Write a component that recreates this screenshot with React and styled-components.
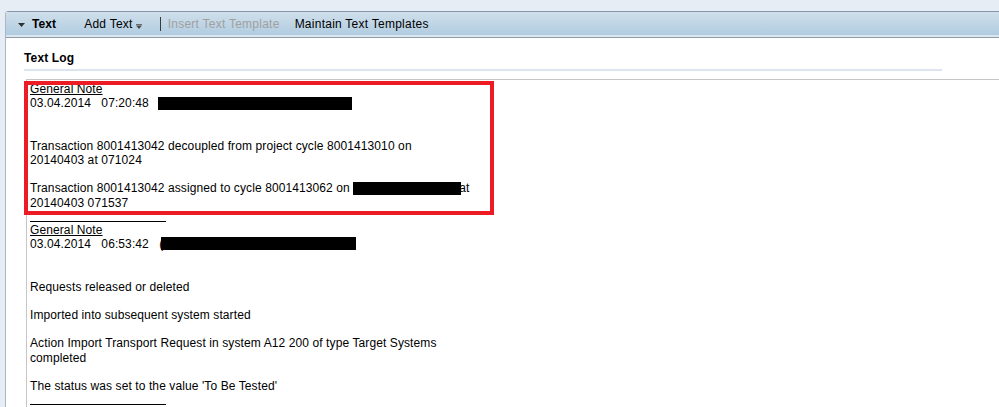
import React from 'react';
import styled, { createGlobalStyle } from 'styled-components';

const GlobalStyle = createGlobalStyle`
  html, body { margin: 0; padding: 0; }
  body {
    background: #e6edf5;
    font-family: "Liberation Sans", Arial, sans-serif;
    font-size: 12px;
    color: #000;
  }
`;

const Page = styled.div`
  width: 999px;
  height: 407px;
  overflow: hidden;
  box-sizing: border-box;
  padding: 11px 0 0 5px;
`;

const Panel = styled.div`
  height: 100%;
  background: #fff;
  border-left: 1px solid #aab7c5;
  border-top-left-radius: 3px;
  overflow: hidden;
  display: flex;
  flex-direction: column;
`;

const Toolbar = styled.div`
  flex: none;
  height: 24px;
  display: flex;
  align-items: center;
  padding: 0 0 1px 12px;
  box-sizing: content-box;
  border-top: 1px solid #8796a8;
  border-bottom: 1px solid #8e9ba8;
  background: linear-gradient(#d0dfeb, #b0cce0 92%, #dbe6ef 92%);
  white-space: nowrap;
`;

const Caret = styled.svg`
  width: 7px;
  height: 4px;
  margin-top: 1px;
`;

const ToolItem = styled.span`
  margin-left: ${(p) => p.$gap || 0}px;
  font-weight: ${(p) => (p.$bold ? 'bold' : 'normal')};
  color: ${(p) => (p.$disabled ? '#a0a0a0' : '#000')};
  letter-spacing: ${(p) => (p.$bold ? '0.1px' : '0.25px')};
  line-height: 14px;
`;

const MenuArrow = styled.svg`
  width: 6px;
  height: 5px;
  margin-left: 3px;
  margin-top: 4px;
`;

const ToolSep = styled.span`
  width: 1px;
  height: 14px;
  background: #3a3a3a;
  margin-left: ${(p) => p.$gap || 0}px;
`;

const Body = styled.div`
  flex: 1;
  display: flex;
  flex-direction: column;
  padding: 13px 0 0 18px;
  min-height: 0;
`;

const SectionTitle = styled.div`
  width: 918px;
  font-weight: bold;
  line-height: 14px;
  letter-spacing: 0.15px;
  padding-bottom: 4px;
  border-bottom: 2px solid #dce5ee;
`;

const LogBox = styled.div`
  position: relative;
  flex: 1;
  margin: 8px 0 0 2px;
  padding: 2px 0 0 3px;
  border-top: 1px solid #c6c6c6;
  border-left: 1px solid #c6c6c6;
  white-space: pre;
  line-height: 14.2px;
  letter-spacing: 0.1px;
`;

const Note = styled.div``;

const NoteTitle = styled.div`
  text-decoration: underline;
`;

const Line = styled.div`
  min-height: 14.2px;
`;

const Redact = styled.span`
  position: relative;
  display: inline-block;
  width: ${(p) => p.$w}px;
  height: 13px;
  margin-left: ${(p) => p.$ml || 0}px;
  background: #000;
  vertical-align: -2.5px;
`;

const Tuck = styled.span`
  margin-left: -2px;
`;

const Separator = styled.div`
  width: 136px;
  height: 1px;
  background: #000;
  margin: 11px 0 1px;
`;

const Highlight = styled.div`
  position: absolute;
  left: -3px;
  top: 1px;
  width: 470px;
  height: 134px;
  box-sizing: border-box;
  border: 4px solid #ed1c24;
  pointer-events: none;
`;

export default function App() {
  return (
    <>
      <GlobalStyle />
      <Page>
        <Panel>
          <Toolbar>
            <Caret viewBox="0 0 7 4">
              <path d="M0 0 H7 L3.5 4 Z" fill="#2f2f2f" />
            </Caret>
            <ToolItem $bold $gap={7}>Text</ToolItem>
            <ToolItem $gap={28}>Add Text</ToolItem>
            <MenuArrow viewBox="0 0 6 5">
              <rect x="0" y="0" width="6" height="1" fill="#6a6a6a" />
              <path d="M0 1.5 H6 L3 5 Z" fill="#4a4a4a" />
            </MenuArrow>
            <ToolSep $gap={18} />
            <ToolItem $disabled $gap={7}>Insert Text Template</ToolItem>
            <ToolItem $gap={15}>Maintain Text Templates</ToolItem>
          </Toolbar>
          <Body>
            <SectionTitle>Text Log</SectionTitle>
            <LogBox>
              <Note>
                <NoteTitle>General Note</NoteTitle>
                <Line>
                  {'03.04.2014   07:20:48   '}
                  <Redact $w={194} $ml={-1} />
                </Line>
                <Line />
                <Line />
                <Line>Transaction 8001413042 decoupled from project cycle 8001413010 on</Line>
                <Line>20140403 at 071024</Line>
                <Line />
                <Line>
                  {'Transaction 8001413042 assigned to cycle 8001413062 on '}
                  <Redact $w={108} />
                  <Tuck>at</Tuck>
                </Line>
                <Line>20140403 071537</Line>
              </Note>
              <Separator />
              <Note>
                <NoteTitle>General Note</NoteTitle>
                <Line>
                  {'03.04.2014   06:53:42   ('}
                  <Redact $w={195} $ml={-2} />
                </Line>
                <Line />
                <Line />
                <Line>Requests released or deleted</Line>
                <Line />
                <Line>Imported into subsequent system started</Line>
                <Line />
                <Line>Action Import Transport Request in system A12 200 of type Target Systems</Line>
                <Line>completed</Line>
                <Line />
                <Line>The status was set to the value 'To Be Tested'</Line>
              </Note>
              <Separator />
              <Highlight />
            </LogBox>
          </Body>
        </Panel>
      </Page>
    </>
  );
}
